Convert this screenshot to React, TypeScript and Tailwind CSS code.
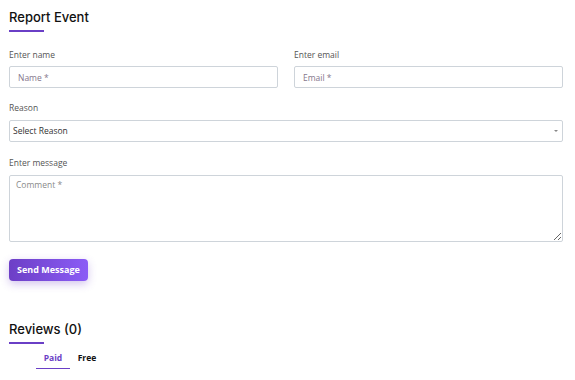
export default function App() {
  return (
    <div className="min-h-screen bg-white font-['Open_Sans',sans-serif] text-[#1a1a1a]">
      <div className="px-[9px] pt-[7px] w-[572px]">
        {/* Report form */}
        <h2 className="font-['Inter',sans-serif] text-[13px] font-medium leading-5 text-[#111]">Report Event</h2>
        <div className="mt-[3px] w-[35px] h-[2px] bg-[#6a3fc6]" />

        <form className="mt-[17px]" onSubmit={(e) => e.preventDefault()}>
          <div className="grid grid-cols-2 gap-x-[16px]">
            <div>
              <label className="block text-[8.5px] leading-3 text-[#555]">Enter name</label>
              <input
                placeholder="Name *"
                className="mt-[5px] w-full h-[22px] rounded-[2px] border border-[#ced4da] px-[8px] text-[8.5px] outline-none placeholder:text-[#85778c]"
              />
            </div>
            <div>
              <label className="block text-[8.5px] leading-3 text-[#555]">Enter email</label>
              <input
                placeholder="Email *"
                className="mt-[5px] w-full h-[22px] rounded-[2px] border border-[#ced4da] px-[8px] text-[8.5px] outline-none placeholder:text-[#85778c]"
              />
            </div>
          </div>

          <div className="mt-[14px]">
            <label className="block text-[8.5px] leading-3 text-[#555]">Reason</label>
            <div className="relative mt-[6px]">
              <select className="block w-full h-[22px] appearance-none rounded-[2px] border border-[#ced4da] bg-white px-[3px] text-[8.5px] text-[#333] outline-none">
                <option>Select Reason</option>
              </select>
              <span className="pointer-events-none absolute right-[5px] top-[10px] h-0 w-0 border-x-[2px] border-t-[2px] border-x-transparent border-t-[#888]" />
            </div>
          </div>

          <div className="mt-[15px]">
            <label className="block text-[8.5px] leading-3 text-[#555]">Enter message</label>
            <textarea
              placeholder="Comment *"
              className="mt-[6px] block w-full h-[67px] rounded-[2px] border border-[#ced4da] px-[6px] py-[3px] text-[8.5px] outline-none placeholder:text-[#8a8a8a]"
            />
          </div>

          <button
            type="submit"
            className="mt-[17px] block h-[22px] w-[79px] rounded-[4px] bg-gradient-to-r from-[#6d3fc6] to-[#8b5cf6] text-[9px] font-bold text-white shadow-[0_3px_8px_rgba(109,63,198,0.3)]"
          >
            Send Message
          </button>
        </form>

        {/* Reviews */}
        <h2 className="mt-[38px] font-['Inter',sans-serif] text-[13px] font-medium leading-5 text-[#111]">Reviews (0)</h2>
        <div className="mt-[3px] w-[35px] h-[2px] bg-[#6a3fc6]" />

        <div className="mt-[4px] flex pl-[27px] text-[8.5px] font-bold">
          <button className="w-[34px] h-[21px] border-b-[1.5px] border-[#6a3fc6] text-[#6a3fc6]">Paid</button>
          <button className="ml-[2px] w-[30px] h-[21px] text-[#111]">Free</button>
        </div>
      </div>
    </div>
  );
}
